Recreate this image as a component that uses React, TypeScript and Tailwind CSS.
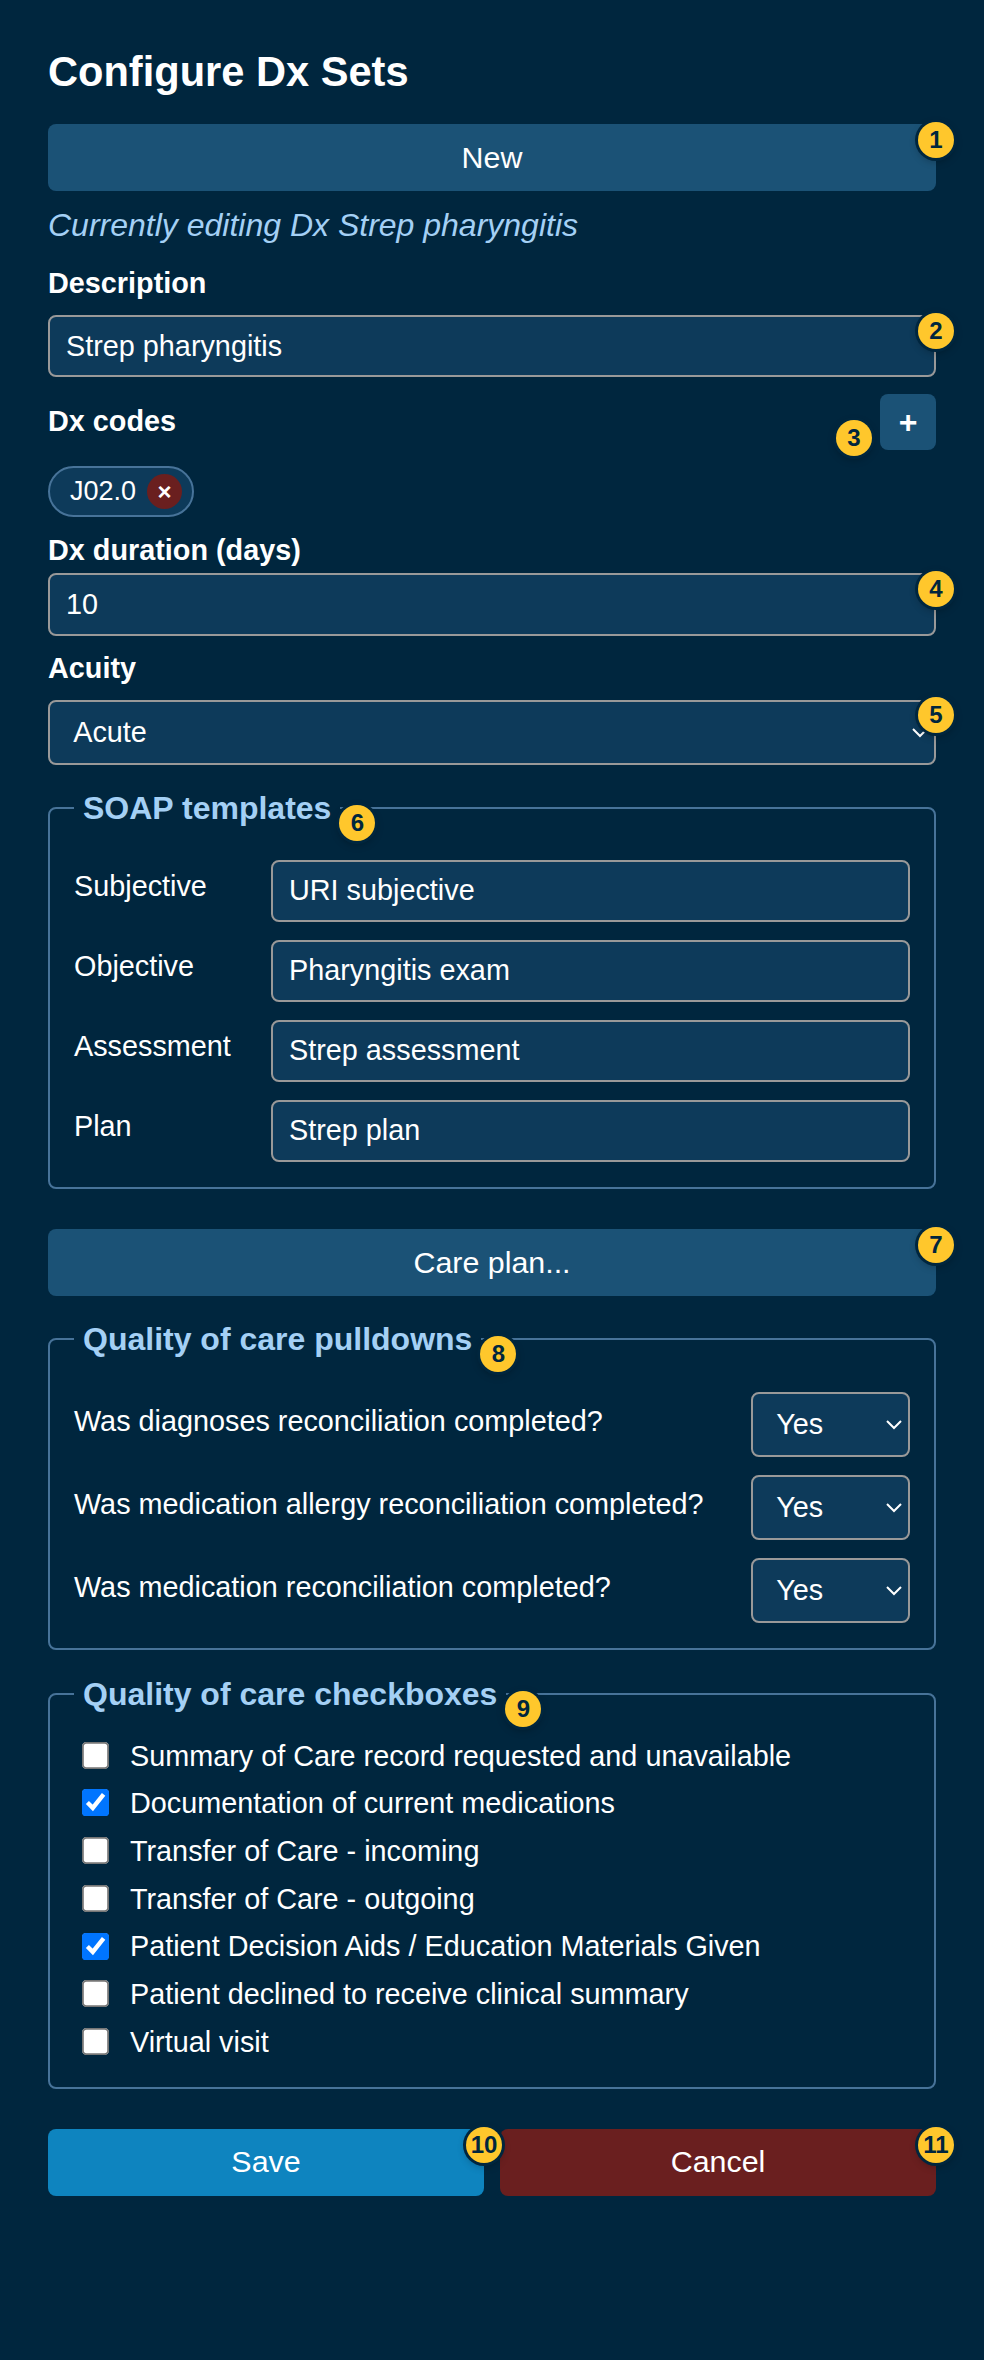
import React from 'react';

const Badge: React.FC<{ n: number; className: string }> = ({ n, className }) => (
  <span
    className={`absolute z-10 flex h-9 w-9 items-center justify-center rounded-full bg-[#ffc72c] text-[24px] font-bold leading-none text-[#00263e] shadow-[0_0_0_3px_#00263e,0_3px_8px_rgba(0,0,0,0.3)] ${className}`}
  >
    {n}
  </span>
);

const inputClass =
  'w-full rounded-lg border-2 border-[#999999] bg-[#0d3a5a] px-4 text-[28.8px] text-white outline-none';

// native select scaled up so the browser's arrow has the right size
const selectClass =
  'h-[36.1px] rounded-[4.4px] border-[1.2px] border-[#999999] bg-[#0d3a5a] px-[9px] text-[16px] text-white outline-none [zoom:1.8]';

const legendClass = 'relative ml-0 px-[9px] text-[32px] font-bold leading-[34px] text-[#a4d0f5]';

const soapRows = [
  ['Subjective', 'URI subjective'],
  ['Objective', 'Pharyngitis exam'],
  ['Assessment', 'Strep assessment'],
  ['Plan', 'Strep plan']
];

const pulldowns = [
  'Was diagnoses reconciliation completed?',
  'Was medication allergy reconciliation completed?',
  'Was medication reconciliation completed?'
];

const checkboxes: [string, boolean][] = [
  ['Summary of Care record requested and unavailable', false],
  ['Documentation of current medications', true],
  ['Transfer of Care - incoming', false],
  ['Transfer of Care - outgoing', false],
  ['Patient Decision Aids / Education Materials Given', true],
  ['Patient declined to receive clinical summary', false],
  ['Virtual visit', false]
];

export default function App() {
  return (
    <div className="min-h-[2360px] bg-[#00263e] px-12 pt-[48px] font-['Liberation_Sans',Arial,sans-serif] text-[28.8px] text-white">
      <h1 className="text-[41.6px] font-bold leading-[48px]">Configure Dx Sets</h1>

      <div className="relative mt-[28px]">
        <button className="h-[67px] w-full rounded-lg bg-[#1b5276] text-[30.4px] text-white">New</button>
        <Badge n={1} className="-right-[18px] -top-[2px]" />
      </div>

      <p className="mt-[17px] text-[32px] italic leading-[34px] text-[#a4d0f5]">Currently editing Dx Strep pharyngitis</p>

      <label className="mt-[25px] block font-bold leading-[32px]">Description</label>
      <div className="relative mt-[16px]">
        <input className={`${inputClass} h-[62px]`} defaultValue="Strep pharyngitis" />
        <Badge n={2} className="-right-[18px] -top-[2px]" />
      </div>

      <div className="mt-[17px] flex items-start justify-between">
        <label className="mt-[11px] font-bold leading-[32px]">Dx codes</label>
        <div className="relative">
          <button className="h-14 w-14 rounded-lg bg-[#1b5276] text-[32px] font-bold leading-none text-white">+</button>
          <Badge n={3} className="-left-[44px] top-[26px]" />
        </div>
      </div>

      <div className="mt-[16px] flex">
        <span className="flex h-[51px] items-center rounded-full border-2 border-[#477399] bg-[#0d3a5a] pl-5 pr-[10px] text-[27px] leading-none">
          J02.0
          <span className="ml-[11px] flex h-[35px] w-[35px] items-center justify-center rounded-full bg-[#6a1f1f] text-[24px] font-bold leading-none">×</span>
        </span>
      </div>

      <label className="mt-[17px] block font-bold leading-[32px]">Dx duration (days)</label>
      <div className="relative mt-[7px]">
        <input className={`${inputClass} h-[63px]`} defaultValue="10" />
        <Badge n={4} className="-right-[18px] -top-[2px]" />
      </div>

      <label className="mt-[16px] block font-bold leading-[32px]">Acuity</label>
      <div className="relative mt-[16px]">
        <select className={`${selectClass} w-full`} defaultValue="Acute">
          <option>Acute</option>
        </select>
        <Badge n={5} className="-right-[18px] -top-[3px]" />
      </div>

      <fieldset className="mt-[26px] rounded-lg border-2 border-[#477399] px-6 pb-[25px] pt-[35px]">
        <legend className={legendClass}>
          SOAP templates
          <Badge n={6} className="-right-[35px] top-[14px]" />
        </legend>
        <div className="flex flex-col gap-[18px]">
          {soapRows.map(([label, value]) => (
            <div key={label} className="flex items-start">
              <label className="w-[197px] shrink-0 pt-[10px] leading-[32px]">{label}</label>
              <input className={`${inputClass} h-[62px]`} defaultValue={value} />
            </div>
          ))}
        </div>
      </fieldset>

      <div className="relative mt-[40px]">
        <button className="h-[67px] w-full rounded-lg bg-[#1b5276] text-[30.4px] text-white">Care plan...</button>
        <Badge n={7} className="-right-[18px] -top-[2px]" />
      </div>

      <fieldset className="mt-[26px] rounded-lg border-2 border-[#477399] px-6 pb-[25px] pt-[36px]">
        <legend className={legendClass}>
          Quality of care pulldowns
          <Badge n={8} className="-right-[35px] top-[14px]" />
        </legend>
        <div className="flex flex-col gap-[18px]">
          {pulldowns.map(label => (
            <div key={label} className="flex items-start justify-between">
              <label className="pt-[13px] leading-[32px]">{label}</label>
              <select className={`${selectClass} w-[88.3px]`} defaultValue="Yes">
                <option>Yes</option>
                <option>No</option>
              </select>
            </div>
          ))}
        </div>
      </fieldset>

      <fieldset className="mt-[27px] rounded-lg border-2 border-[#477399] px-6 pb-[21px] pt-[21px]">
        <legend className={legendClass}>
          Quality of care checkboxes
          <Badge n={9} className="-right-[35px] top-[14px]" />
        </legend>
        <div className="flex flex-col">
          {checkboxes.map(([label, checked]) => (
            <label key={label} className="flex h-[47.7px] items-center">
              <input type="checkbox" defaultChecked={checked} className="ml-[4.5px] h-[15.5px] w-[15.5px] shrink-0 [zoom:1.8]" />
              <span className="ml-[20px] leading-[32px]">{label}</span>
            </label>
          ))}
        </div>
      </fieldset>

      <div className="mt-[40px] flex gap-4">
        <div className="relative flex-1">
          <button className="h-[67px] w-full rounded-lg bg-[#0e84bf] text-[30.4px] text-white">Save</button>
          <Badge n={10} className="-right-[18px] -top-[2px]" />
        </div>
        <div className="relative flex-1">
          <button className="h-[67px] w-full rounded-lg bg-[#6a1f1f] text-[30.4px] text-white">Cancel</button>
          <Badge n={11} className="-right-[18px] -top-[2px]" />
        </div>
      </div>
    </div>
  );
}
